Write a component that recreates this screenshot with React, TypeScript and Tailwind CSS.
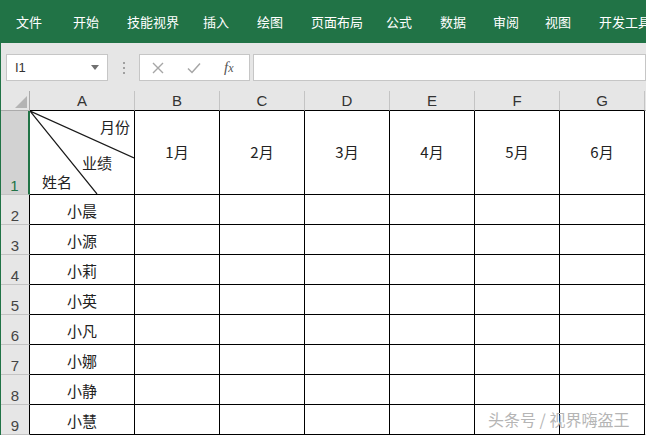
import React from 'react';

const tabs = [
  { t: '文件', w: 'w-[57px]' },
  { t: '开始', w: 'w-[54px]' },
  { t: '技能视界', w: 'w-[76px]' },
  { t: '插入', w: 'w-[54px]' },
  { t: '绘图', w: 'w-[54px]' },
  { t: '页面布局', w: 'w-[75px]' },
  { t: '公式', w: 'w-[54px]' },
  { t: '数据', w: 'w-[53px]' },
  { t: '审阅', w: 'w-[52px]' },
  { t: '视图', w: 'w-[54px]' },
  { t: '开发工具', w: 'w-[60px]' },
];
const cols = ['A', 'B', 'C', 'D', 'E', 'F', 'G'];
const months = ['1月', '2月', '3月', '4月', '5月', '6月'];
const names = ['小晨', '小源', '小莉', '小英', '小凡', '小娜', '小静', '小慧'];

const cjk = { fontFamily: '"Noto Sans CJK SC", "Noto Sans", sans-serif' };

const App: React.FC = () => {
  return (
    <div className="relative w-[646px] h-[436px] overflow-hidden bg-white" style={cjk}>
      {/* Ribbon tabs */}
      <div className="h-[43px] bg-[#217346] flex items-center pl-[16px] pt-[1px] text-white text-[13px] whitespace-nowrap overflow-hidden">
        {tabs.map(tab => (
          <span key={tab.t} className={`${tab.w} shrink-0`}>{tab.t}</span>
        ))}
      </div>

      <div className="border-l border-[#217346] bg-[#e6e6e6]">
        {/* Formula bar */}
        <div className="h-[48px] flex items-start pt-[11px] pl-[5px]">
          <div className="w-[102px] h-[27px] bg-white border border-[#c6c6c6] flex items-center justify-between pl-[8px] pr-[8px] text-[13px] text-[#333]">
            <span style={{ fontFamily: '"Liberation Sans", sans-serif' }}>I1</span>
            <svg width="8" height="5" viewBox="0 0 8 5"><path d="M0 0h8L4 5z" fill="#707070" /></svg>
          </div>
          <div className="w-[31px] h-[27px] flex flex-col items-center justify-center gap-[3px]">
            <span className="w-[2px] h-[2px] bg-[#a0a0a0]" />
            <span className="w-[2px] h-[2px] bg-[#a0a0a0]" />
            <span className="w-[2px] h-[2px] bg-[#a0a0a0]" />
          </div>
          <div className="w-[111px] h-[27px] bg-white border border-[#c6c6c6] flex items-center pl-[12px] gap-[23px]">
            <svg width="12" height="12" viewBox="0 0 12 12">
              <path d="M1 1l10 10M11 1L1 11" stroke="#a6a6a6" strokeWidth="1.4" />
            </svg>
            <svg width="14" height="12" viewBox="0 0 14 12">
              <path d="M1 6.5l4 4L13 1.5" stroke="#a6a6a6" strokeWidth="1.5" fill="none" />
            </svg>
            <span
              className="text-[15px] italic text-[#555] leading-none"
              style={{ fontFamily: '"Liberation Serif", serif' }}
            >
              f<span className="text-[12px]">x</span>
            </span>
          </div>
          <div className="ml-[3px] flex-1 h-[27px] bg-white border border-[#c6c6c6]" />
        </div>

        {/* Grid */}
        <div className="grid grid-cols-[29px_105px_85px_85px_85px_85px_85px_85px_1fr] grid-rows-[20px_84px_repeat(8,30px)] bg-white">
          {/* header row */}
          <div className="bg-[#e6e6e6] border-r border-b border-[#ababab] flex items-end justify-end pr-[2px] pb-[2px]">
            <svg width="12" height="12" viewBox="0 0 12 12"><path d="M12 0v12H0z" fill="#b4b4b4" /></svg>
          </div>
          {cols.map(c => (
            <div
              key={c}
              className="bg-[#e6e6e6] border-r border-[#c4c4c4] border-b border-b-black flex items-center justify-center text-[15px] text-[#333] leading-none"
              style={{ fontFamily: '"Liberation Sans", sans-serif' }}
            >
              {c}
            </div>
          ))}
          <div className="bg-[#e6e6e6] border-b border-[#ababab]" />

          {/* row 1 */}
          <div
            className="bg-[#d2d2d2] border-r-2 border-r-[#217346] border-b border-b-[#c4c4c4] flex items-end justify-center pb-[1px] text-[15px] text-[#217346] leading-none"
            style={{ fontFamily: '"Liberation Sans", sans-serif' }}
          >
            1
          </div>
          <div className="relative border-r border-b border-black text-[15px] text-[#222] leading-none">
            <svg className="absolute left-0 top-0" width="104" height="83" viewBox="0 0 104 83">
              <path d="M0 0L104 47M0 0L67 83" stroke="#1a1a1a" strokeWidth="1.2" fill="none" />
            </svg>
            <span className="absolute right-[4px] top-[8px]">月份</span>
            <span className="absolute left-[52px] top-[44px]">业绩</span>
            <span className="absolute left-[12px] top-[63px]">姓名</span>
          </div>
          {months.map(m => (
            <div key={m} className="border-r border-b border-black flex items-center justify-center text-[15px] text-[#222]">
              {m}
            </div>
          ))}
          <div className="border-b border-[#d4d4d4]" />

          {/* rows 2-9 */}
          {names.map((n, i) => (
            <React.Fragment key={n}>
              <div
                className="bg-[#e6e6e6] border-r border-r-black border-b border-b-[#c4c4c4] flex items-end justify-center pb-[1px] text-[15px] text-[#444] leading-none"
                style={{ fontFamily: '"Liberation Sans", sans-serif' }}
              >
                {i + 2}
              </div>
              <div className="border-r border-b border-black flex items-center justify-center pt-[4px] text-[15px] text-[#222]">
                {n}
              </div>
              {months.map(m => (
                <div key={m} className="border-r border-b border-black" />
              ))}
              <div className="border-b border-[#d4d4d4]" />
            </React.Fragment>
          ))}
        </div>
      </div>

      {/* watermark */}
      <div className="absolute left-[488px] top-[407px] text-[16px] text-[#b5b5b5] whitespace-nowrap">
        头条号 / 视界嗨盗王
      </div>
    </div>
  );
};

export default App;
